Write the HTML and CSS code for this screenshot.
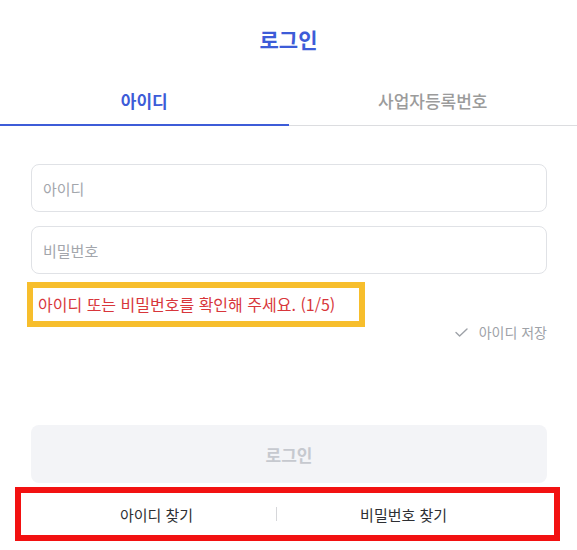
FILE: index.html
```html
<!DOCTYPE html>
<html lang="ko">
<head>
<meta charset="utf-8">
<title>로그인</title>
<link rel="stylesheet" href="styles.css">
</head>
<body>
<div class="page">
  <h1 class="title">로그인</h1>
  <div class="tabs">
    <div class="tab active">아이디</div>
    <div class="tab">사업자등록번호</div>
  </div>
  <form class="form">
    <input class="field" type="text" placeholder="아이디">
    <input class="field" type="password" placeholder="비밀번호">
    <p class="error">아이디 또는 비밀번호를 확인해 주세요. (1/5)</p>
    <div class="save-row">
      <span class="save">
        <svg class="check" width="13" height="9" viewBox="0 0 13 9"><path d="M1 4.5 L4.6 8 L12 1" fill="none" stroke="#9ea2a8" stroke-width="1.4" stroke-linecap="round" stroke-linejoin="round"/></svg>
        아이디 저장
      </span>
    </div>
    <button class="login" type="button">로그인</button>
    <div class="links">
      <span class="link">아이디 찾기</span>
      <span class="divider"></span>
      <span class="link">비밀번호 찾기</span>
    </div>
  </form>
</div>
</body>
</html>
```
FILE: styles.css
```css
* { box-sizing: border-box; }
html, body { margin: 0; padding: 0; background: #fff; }
body {
  font-family: "Noto Sans CJK KR", "Noto Sans", sans-serif;
  color: #333;
}
.page { width: 577px; padding-bottom: 8px; }
.title {
  margin: 0;
  height: 78px;
  padding-top: 27px;
  text-align: center;
  font-size: 21px;
  line-height: 24px;
  font-weight: 700;
  color: #3d5cd8;
}
.tabs {
  display: flex;
  border-bottom: 1px solid #dcdde0;
}
.tab {
  flex: 1;
  text-align: center;
  font-size: 17px;
  line-height: 24px;
  padding: 11px 0 11px;
  font-weight: 500;
  color: #9b9b9b;
  margin-bottom: -1px;
  border-bottom: 2px solid transparent;
}
.tab.active {
  color: #3d5cd8;
  font-weight: 700;
  border-bottom-color: #3d5cd8;
}
.form {
  padding: 38px 30px 0 31px;
  display: flex;
  flex-direction: column;
}
.field {
  height: 48px;
  border: 1px solid #e0e2e6;
  border-radius: 8px;
  padding: 0 11px;
  font-family: inherit;
  font-size: 15px;
  color: #333;
  outline: none;
}
.field + .field { margin-top: 14px; }
.field::placeholder { color: #a3a6ac; }
.error {
  margin: 14px 0 0 2px;
  align-self: flex-start;
  width: 326px;
  height: 33px;
  padding-left: 5px;
  font-size: 16px;
  line-height: 33px;
  color: #d8363b;
  outline: 6px solid #f7be2c;
  white-space: nowrap;
}
.save-row {
  display: flex;
  justify-content: flex-end;
  margin-top: 1px;
}
.save {
  display: flex;
  align-items: center;
  gap: 11px;
  font-size: 14px;
  line-height: 20px;
  color: #9ea2a8;
}
.check { display: block; margin-top: 1px; }
.login {
  margin-top: 83px;
  height: 58px;
  border: none;
  border-radius: 8px;
  background: #f3f4f7;
  font-family: inherit;
  font-size: 17px;
  font-weight: 700;
  color: #c6c9cf;
}
.links {
  margin: 10px -7px 0 -10px;
  height: 42px;
  display: flex;
  align-items: center;
  justify-content: center;
  gap: 83px;
  padding-right: 8px;
  border: 0;
  box-shadow: 0 0 0 6px #f21111;
}
.link {
  font-size: 15px;
  font-weight: 400;
  color: #2e2f33;
}
.divider {
  width: 1px;
  height: 14px;
  background: #d6d7da;
}
```
